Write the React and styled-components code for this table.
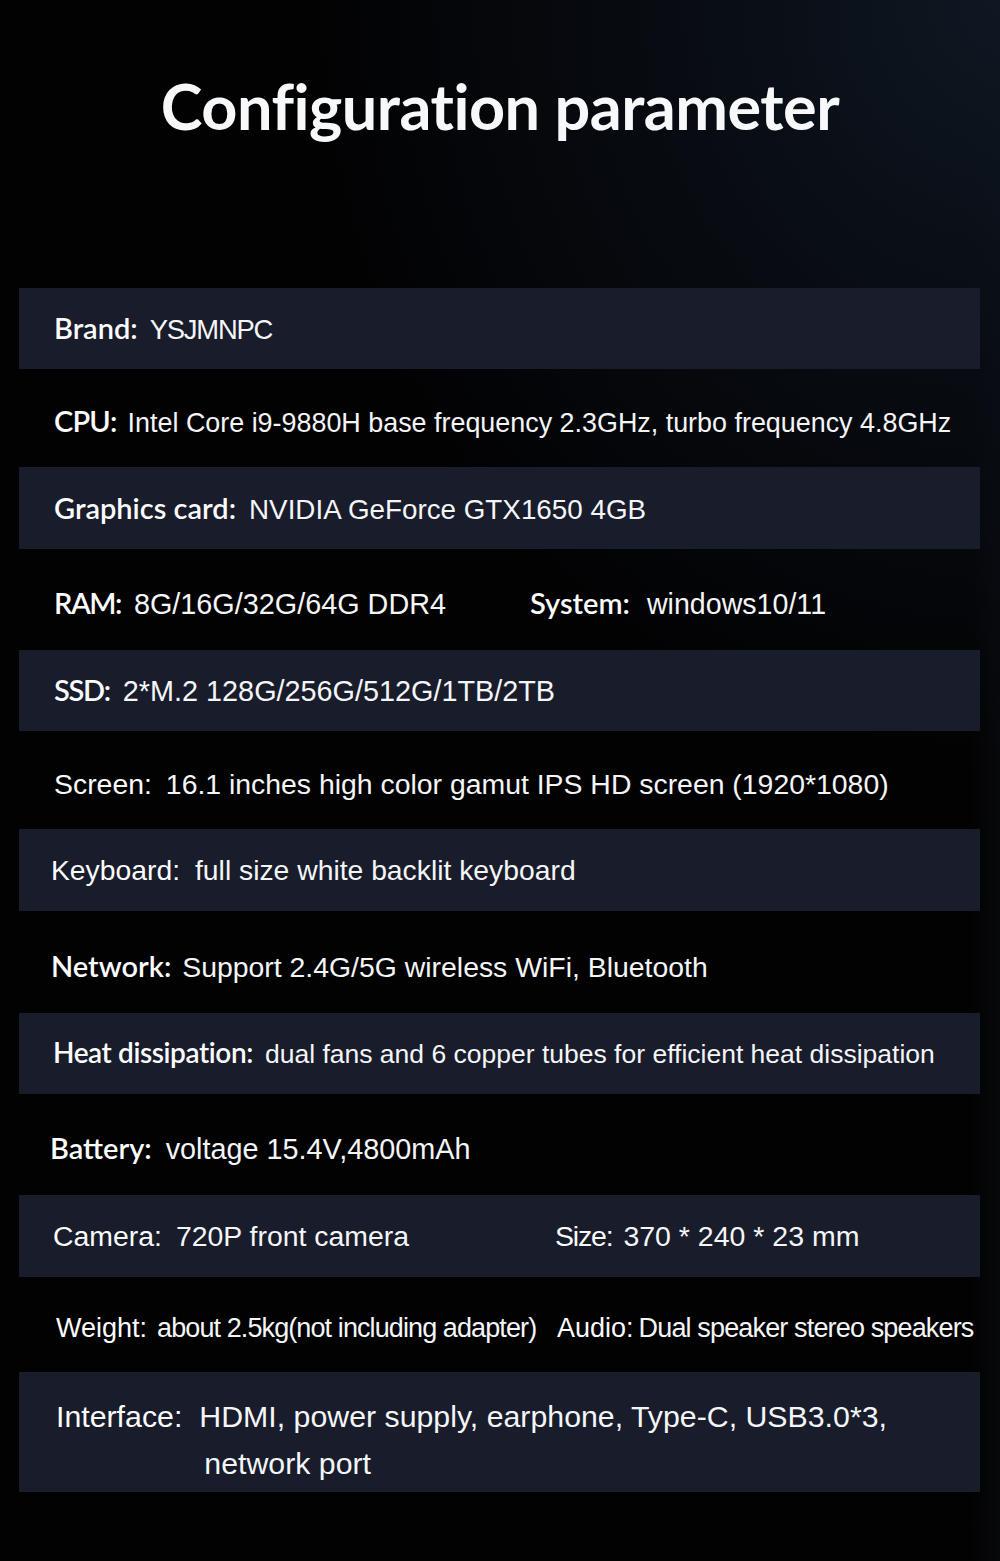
import styled, { createGlobalStyle } from "styled-components";

const GlobalStyle = createGlobalStyle`
  html, body {
    margin: 0;
    padding: 0;
    background: #020203;
  }
  body {
    font-family: "Liberation Sans", Arial, sans-serif;
    color: #fff;
  }
`;

const NextLine = styled.span`
  display: inline-block;
  padding-left: 5px;
`;

// label styles: human = humanist face (Lato), otherwise Arial-like like the value
const specs = [
  { band: true, h: 81, cells: [{ label: "Brand:", value: "YSJMNPC", size: 27.4, track: -1.2, human: true, gap: 12 }] },
  {
    h: 98,
    cells: [
      {
        label: "CPU:",
        value: "Intel Core i9-9880H base frequency 2.3GHz, turbo frequency 4.8GHz",
        size: 26.9,
        human: true,
        ltrack: -0.8,
        gap: 11,
      },
    ],
  },
  { band: true, h: 82, cells: [{ label: "Graphics card:", value: "NVIDIA GeForce GTX1650 4GB", size: 27.8, human: true, gap: 13 }] },
  {
    h: 101,
    split: 476,
    cells: [
      { label: "RAM:", value: "8G/16G/32G/64G DDR4", size: 28.8, human: true, ltrack: -1.5, gap: 13 },
      { label: "System:", value: "windows10/11", size: 28.6, human: true, gap: 17 },
    ],
  },
  { band: true, h: 81, cells: [{ label: "SSD:", value: "2*M.2 128G/256G/512G/1TB/2TB", size: 28.8, human: true, ltrack: -1.3, gap: 13 }] },
  { h: 98, cells: [{ label: "Screen:", value: "16.1 inches high color gamut IPS HD screen (1920*1080)", size: 28.4, gap: 14 }] },
  { band: true, h: 82, indent: 32, cells: [{ label: "Keyboard:", value: "full size white backlit keyboard", size: 28.3, gap: 15 }] },
  { h: 102, indent: 32, cells: [{ label: "Network:", value: "Support 2.4G/5G wireless WiFi, Bluetooth", size: 28.4, human: true, gap: 11 }] },
  {
    band: true,
    h: 81,
    indent: 34,
    cells: [
      {
        label: "Heat dissipation:",
        value: "dual fans and 6 copper tubes for efficient heat dissipation",
        size: 26.5,
        human: true,
        lsize: 28,
        ltrack: -0.4,
        gap: 12,
      },
    ],
  },
  { h: 101, indent: 31, cells: [{ label: "Battery:", value: "voltage 15.4V,4800mAh", size: 28.8, human: true, gap: 14 }] },
  {
    band: true,
    h: 82,
    indent: 34,
    split: 502,
    cells: [
      { label: "Camera:", value: "720P front camera", size: 28.4, gap: 14 },
      { label: "Size:", value: "370 * 240 * 23 mm", size: 28.5, ltrack: -1.2, gap: 11 },
    ],
  },
  {
    h: 95,
    indent: 37,
    split: 501,
    cells: [
      { label: "Weight:", value: "about 2.5kg(not including adapter)", size: 27, track: -0.9, gap: 10 },
      { label: "Audio:", value: "Dual speaker stereo speakers", size: 27, track: -0.85, gap: 5 },
    ],
  },
  {
    band: true,
    h: 120,
    indent: 37,
    cells: [
      {
        label: "Interface:",
        value: (
          <>
            HDMI, power supply, earphone, Type-C, USB3.0*3,
            <br />
            <NextLine>network port</NextLine>
          </>
        ),
        size: 30.3,
        gap: 17,
        lines: true,
      },
    ],
  },
];

export default function App() {
  return (
    <>
      <GlobalStyle />
      <Page>
        <Header>
          <Title>Configuration parameter</Title>
        </Header>
        <List>
          {specs.map((row, idx) => (
            <Row key={idx} $band={row.band} $h={row.h} $indent={row.indent ?? 35} $split={row.split}>
              {row.cells.map((cell, i) => (
                <Entry key={i} $lines={cell.lines}>
                  <Label
                    $human={cell.human}
                    $size={cell.lsize ?? (cell.human ? 29 : cell.size)}
                    $track={cell.ltrack ?? 0}
                    $gap={cell.gap ?? 12}
                  >
                    {cell.label}
                  </Label>
                  <Value $size={cell.size} $track={cell.track ?? 0}>
                    {cell.value}
                  </Value>
                </Entry>
              ))}
            </Row>
          ))}
        </List>
      </Page>
    </>
  );
}

const Page = styled.div`
  width: 1000px;
  height: 1561px;
  overflow: hidden;
  background:
    radial-gradient(ellipse 820px 900px at 100% 0%, rgba(15, 23, 34, 1) 0%, rgba(10, 15, 23, 0.75) 40%, rgba(3, 4, 6, 0) 85%),
    linear-gradient(90deg, #020203 0%, #020203 97%, #07080b 100%);
`;

const Header = styled.header`
  height: 288px;
  box-sizing: border-box;
  padding-top: 66px;
  display: flex;
  justify-content: center;
  align-items: flex-start;
`;

const Title = styled.h1`
  margin: 0;
  font-family: Lato, "Open Sans", sans-serif;
  font-weight: 700;
  font-size: 63px;
  line-height: 80px;
  letter-spacing: -0.5px;
  color: #f7f8fa;
`;

const List = styled.div`
  display: flex;
  flex-direction: column;
`;

const Row = styled.div`
  height: ${(p) => p.$h}px;
  margin: 0 20px 0 19px;
  box-sizing: border-box;
  padding-left: ${(p) => p.$indent}px;
  padding-top: ${(p) => (p.$band ? 0 : 8)}px;
  background: ${(p) => (p.$band ? "#191c2b" : "transparent")};
  display: grid;
  grid-template-columns: ${(p) => (p.$split ? `${p.$split}px 1fr` : "1fr")};
  align-items: center;
`;

const Entry = styled.div`
  display: flex;
  align-items: ${(p) => (p.$lines ? "flex-start" : "baseline")};
  white-space: nowrap;
  padding-top: ${(p) => (p.$lines ? 16 : 0)}px;
`;

const Label = styled.span`
  font-family: ${(p) => (p.$human ? 'Lato, "Open Sans", sans-serif' : '"Liberation Sans", Arial, sans-serif')};
  font-weight: ${(p) => (p.$human ? 600 : 400)};
  font-size: ${(p) => p.$size}px;
  letter-spacing: ${(p) => p.$track}px;
  line-height: 47px;
  margin-right: ${(p) => p.$gap}px;
  color: #fbfbfc;
`;

const Value = styled.span`
  font-family: "Liberation Sans", Arial, sans-serif;
  font-size: ${(p) => p.$size}px;
  letter-spacing: ${(p) => p.$track}px;
  line-height: 47px;
  color: #f4f5f7;
`;
